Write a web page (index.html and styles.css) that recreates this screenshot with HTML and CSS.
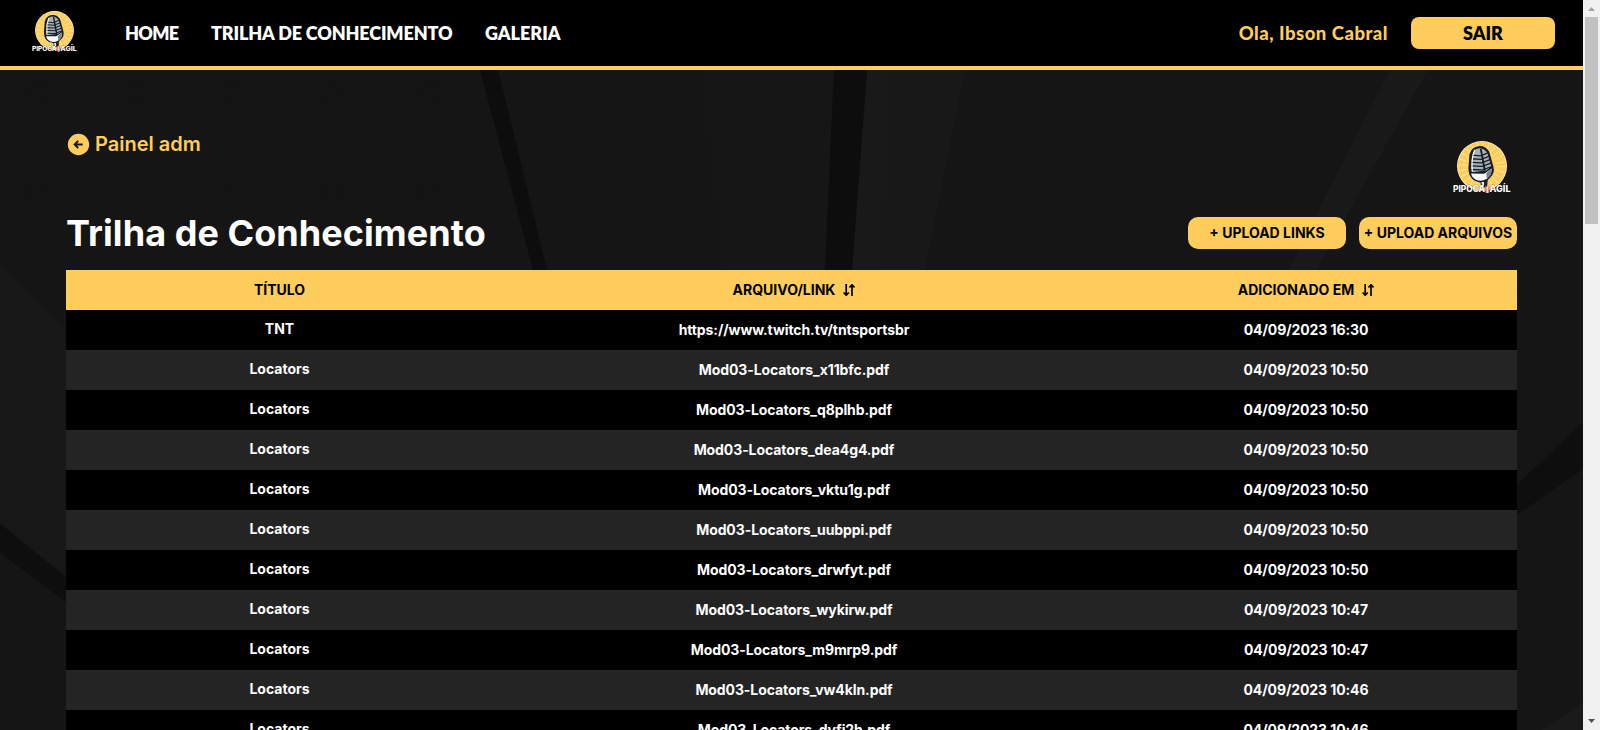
FILE: index.html
```html
<!DOCTYPE html>
<html lang="pt-BR">
<head>
<meta charset="utf-8">
<title>Trilha de Conhecimento</title>
<link rel="stylesheet" href="styles.css">
</head>
<body>
<svg class="defs" width="0" height="0" aria-hidden="true">
  <defs>
    <symbol id="logo" viewBox="0 0 58 54">
      <circle cx="29" cy="25" r="25" fill="#fff3d2"/>
      <circle cx="29" cy="25" r="24.200" fill="#ffcd5c"/>
      <circle cx="29" cy="25" r="18.500" fill="none" stroke="#ffe3a0" stroke-width="9" stroke-dasharray="1 3.840"/>
      <path d="M27 38H34L33.500 46H29Z" fill="#e9edf0" stroke="#111820"/>
      <path d="M31 38h3.500l-.5 8H31z" fill="#1b242d"/>
      <g transform="rotate(-8 28 24)">
        <path d="M15 26 18 12Q21 5 28 5 35 5 38 12L40 27Q41 34 35 38 29 43 22 40 16 37 15 31Z" fill="#131b23"/>
        <path d="M17.500 26 20.500 13Q23 7 28 7 34 8 36 13L38 27 33 30 18 30Z" fill="#a8b1b7"/>
        <path d="M20 13 29 15 36.500 13M19.500 16.500 29 18.500 37 16.500M18.500 20 29 22 37.500 20M18 23.500 29 25.500 38 23.500M17 27 29 29 38.500 27" fill="none" stroke="#131b23" stroke-width="1.300"/>
        <path d="M24 8Q19 16 18.500 29" fill="none" stroke="#fff" stroke-width="1.200"/>
        <path d="M30 8 31 30" stroke="#131b23" stroke-width="1.800"/>
        <path d="M17 31 30 33 38 29Q38 35 32 38.500 26 41 21 38 17 35 17 31Z" fill="#f8f9fa"/>
        <path d="M32 33 38 29Q38 35 32 38.500Z" fill="#77838c"/>
      </g>
      <path d="M31.800 45.500h5l-.8 6.500h-3.400z" fill="#e9837c"/>
      <path d="M34.300 45.500v6.500" stroke="#fff" stroke-width=".9"/>
      <text class="logo-text" x="0" y="51.300" textLength="32" lengthAdjust="spacingAndGlyphs">PIPOCA</text>
      <text class="logo-text" x="36.500" y="51.300" textLength="21" lengthAdjust="spacingAndGlyphs">AGÍL</text>
    </symbol>
    <symbol id="sort" viewBox="0 0 12 12">
      <path d="M3.200 0V11M.6 8.500 3.200 11.200 5.800 8.500M9 12V1M6.400 3.500 9 .8 11.600 3.500" fill="none" stroke="#000" stroke-width="1.700"/>
    </symbol>
  </defs>
</svg>
<div class="window">
  <div class="page">
    <header class="topbar">
      <svg class="brand"><use href="#logo"/></svg>
      <nav class="nav">
        <a class="nav-home">HOME</a>
        <a class="nav-trail">TRILHA DE CONHECIMENTO</a>
        <a class="nav-gallery">GALERIA</a>
      </nav>
      <span class="greeting">Ola, Ibson Cabral</span>
      <button class="btn btn-exit">SAIR</button>
    </header>
    <main class="main">
      <svg class="backdrop" viewBox="0 70 1583 660" preserveAspectRatio="none" aria-hidden="true">
        <defs>
          <radialGradient id="dot"><stop offset=".6" stop-color="#121212"/><stop offset="1" stop-color="#121212" stop-opacity="0"/></radialGradient>
          <pattern id="dots" x="-12" y="43" width="98" height="100" patternUnits="userSpaceOnUse">
            <circle cx="49" cy="50" r="18" fill="url(#dot)"/>
          </pattern>
        </defs>
        <path d="M0 70H460L490 270H0Z" fill="url(#dots)" opacity=".5"/>
        <path d="M1130 70H1583V600H1517V270H1130Z" fill="url(#dots)" opacity=".4"/>
        <path d="M0 270H66V510H0Z" fill="url(#dots)" opacity=".4"/>
        <path d="M700 70H834L825 270H725Z" fill="#161616"/>
        <path d="M867 70H965L925 270H852Z" fill="#191919"/>
        <path d="M885 70H965L925 270H880Z" fill="#181818"/>
        <path d="M480 70H498L547 270H533Z" fill="#0d0d0d"/>
        <path d="M834 70H867L852 270H825Z" fill="#0d0d0d"/>
        <path d="M1390 70H1428L1316 270H1288Z" fill="#191919"/>
        <path d="M0 262 66 330V578L0 523Z" fill="#171717"/>
        <path d="M0 524 66 577V602L0 553Z" fill="#0e0e0e"/>
        <path d="M1583 422V469L1517 515V485Z" fill="#0e0e0e"/>
        <path d="M1583 703V730H1541Z" fill="#1a1a1a"/>
      </svg>
      <div class="back-row">
        <a class="back">
          <svg class="back-icon" viewBox="0 0 22 22"><circle cx="11" cy="11" r="10.200" fill="#ffcd5c"/><path d="M15 11H7.500M10.700 7.600 7.300 11 10.700 14.400" fill="none" stroke="#151515" stroke-width="1.800"/></svg>
          <span>Painel adm</span>
        </a>
        <svg class="badge"><use href="#logo"/></svg>
      </div>
      <div class="title-row">
        <h1 class="title">Trilha de Conhecimento</h1>
        <button class="btn btn-upload">+ UPLOAD LINKS</button>
        <button class="btn btn-upload">+ UPLOAD ARQUIVOS</button>
      </div>
      <div class="table">
        <div class="row head"><span>TÍTULO</span><span>ARQUIVO/LINK <svg class="sort"><use href="#sort"/></svg></span><span>ADICIONADO EM <svg class="sort"><use href="#sort"/></svg></span></div>
        <div class="row"><span class="name">TNT</span><span>https://www.twitch.tv/tntsportsbr</span><span>04/09/2023 16:30</span></div>
        <div class="row alt"><span class="name">Locators</span><span>Mod03-Locators_x11bfc.pdf</span><span>04/09/2023 10:50</span></div>
        <div class="row"><span class="name">Locators</span><span>Mod03-Locators_q8plhb.pdf</span><span>04/09/2023 10:50</span></div>
        <div class="row alt"><span class="name">Locators</span><span>Mod03-Locators_dea4g4.pdf</span><span>04/09/2023 10:50</span></div>
        <div class="row"><span class="name">Locators</span><span>Mod03-Locators_vktu1g.pdf</span><span>04/09/2023 10:50</span></div>
        <div class="row alt"><span class="name">Locators</span><span>Mod03-Locators_uubppi.pdf</span><span>04/09/2023 10:50</span></div>
        <div class="row"><span class="name">Locators</span><span>Mod03-Locators_drwfyt.pdf</span><span>04/09/2023 10:50</span></div>
        <div class="row alt"><span class="name">Locators</span><span>Mod03-Locators_wykirw.pdf</span><span>04/09/2023 10:47</span></div>
        <div class="row"><span class="name">Locators</span><span>Mod03-Locators_m9mrp9.pdf</span><span>04/09/2023 10:47</span></div>
        <div class="row alt"><span class="name">Locators</span><span>Mod03-Locators_vw4kln.pdf</span><span>04/09/2023 10:46</span></div>
        <div class="row"><span class="name">Locators</span><span>Mod03-Locators_dyfi2h.pdf</span><span>04/09/2023 10:46</span></div>
      </div>
    </main>
  </div>
  <div class="scrollbar">
    <svg class="arrow" viewBox="0 0 17 17"><path d="M5 11 8.500 7 12 11Z" fill="#a3a3a3"/></svg>
    <div class="thumb"></div>
    <svg class="arrow arrow-down" viewBox="0 0 17 17"><path d="M5 6 8.500 10 12 6Z" fill="#505050"/></svg>
  </div>
</div>
</body>
</html>
```
FILE: styles.css
```css
* { box-sizing: border-box; }
body { margin: 0; background: #151515; font-family: Inter, "Liberation Sans", sans-serif; color: #fff; overflow: hidden; }
.defs { position: absolute; }
.window { display: flex; height: 730px; overflow: hidden; }
.page { flex: 1; min-width: 0; height: 730px; overflow: hidden; }

.topbar { display: flex; align-items: center; height: 70px; padding: 0 28px 0 32px; background: #000; border-bottom: 4px solid #ffcd5c; font: 800 18px/22px Lato, "Open Sans", sans-serif; }
.brand { width: 45px; height: 42px; margin-top: -3px; }
.nav { display: flex; gap: 32px; margin-left: 48px; }
.nav a { white-space: nowrap; }
.nav-home { width: 54px; letter-spacing: -.7px; }
.nav-trail { width: 242px; letter-spacing: -.15px; }
.nav-gallery { width: 77px; }
.greeting { margin: -1px 23px 0 auto; font-size: 18.500px; font-weight: 900; letter-spacing: .5px; color: #ffcd5c; white-space: nowrap; }
.btn { display: flex; align-items: center; justify-content: center; height: 32px; padding: 0; border: 0; background: #ffcd5c; color: #000; white-space: nowrap; }
.btn-exit { width: 144px; border-radius: 8px; font: 800 18px/22px Lato, sans-serif; }

.main { position: relative; height: 660px; padding: 62px 66px 0; overflow: hidden; background: #151515; }
.backdrop { position: absolute; inset: 0; width: 100%; height: 100%; }
.back-row, .title-row, .table { position: relative; }
.back-row { display: flex; justify-content: space-between; height: 85px; }
.back { display: flex; gap: 5px; height: 24px; align-items: center; padding-left: 1px; color: #ffcd5c; font-size: 20px; font-weight: 600; }
.back-icon { width: 23px; height: 23px; }
.badge { width: 58px; height: 54px; margin: 9px 6px 0 0; }
.title-row { display: flex; align-items: center; gap: 13px; height: 32px; }
.title { flex: 1; margin: 0; font-size: 36px; line-height: 44px; font-weight: 700; letter-spacing: .06px; white-space: nowrap; }
.btn-upload { width: 158px; border-radius: 10px; font: 700 14px/18px Inter, sans-serif; }

.table { margin-top: 21px; font-size: 14px; font-weight: 650; letter-spacing: -.09px; }
.row { display: grid; grid-template-columns: 427px 602px 422px; height: 40px; background: #000; }
.row > span { display: flex; align-items: center; justify-content: center; padding-bottom: 2px; white-space: nowrap; }
.alt { background: #242424; }
.head { background: #ffcd5c; color: #000; font-weight: 700; letter-spacing: 0; }
.row > .name { padding-bottom: 4px; letter-spacing: 0; }
.head .sort { width: 12px; height: 12px; margin: 2px 0 0 8px; }

.scrollbar { display: flex; flex-direction: column; align-items: center; width: 17px; background: #f1f1f1; }
.arrow { width: 17px; height: 17px; }
.arrow-down { margin-top: auto; }
.thumb { width: 13px; height: 207px; background: #c1c1c1; }

.logo-text { font: 800 8.300px Inter, sans-serif; fill: #fff; stroke: #151515; stroke-width: .4px; paint-order: stroke; }
```
